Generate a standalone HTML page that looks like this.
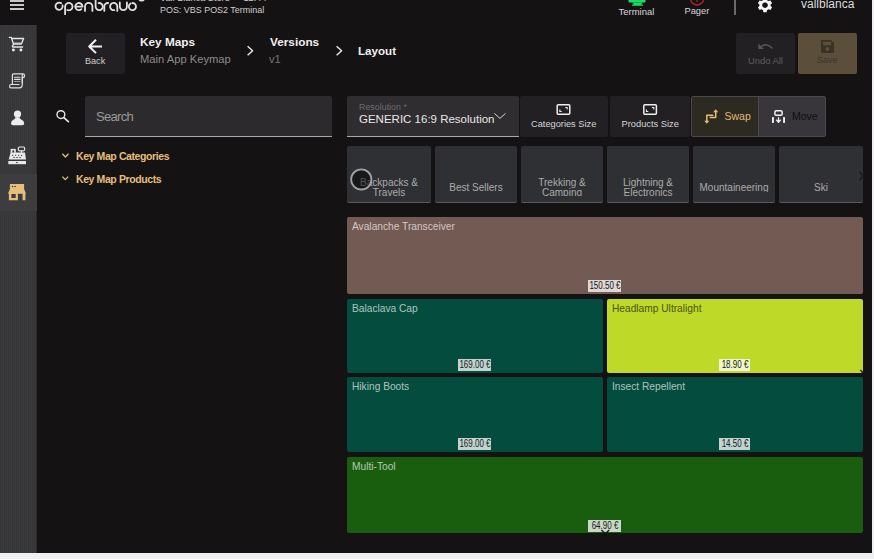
<!DOCTYPE html>
<html><head><meta charset="utf-8">
<style>
*{box-sizing:border-box;margin:0;padding:0}
html,body{width:874px;height:559px;overflow:hidden;background:#eff0f1;font-family:"Liberation Sans",sans-serif}
#app{position:absolute;left:0;top:0;width:872px;height:553px;background:#141213;overflow:hidden}
.a{position:absolute;white-space:nowrap}
#side{position:absolute;left:0;top:25px;width:37px;height:528px;background:repeating-linear-gradient(90deg,#363538 0 1px,#3a393c 1px 2px);box-shadow:inset -1px 0 0 #2a292b}
#sel{position:absolute;left:0;top:174px;width:37px;height:37px;background:#3d3c3f}
.btn{position:absolute;background:#222023;border-radius:2px}
.fld{position:absolute;background:#2d2b2e;border-bottom:1.5px solid #a9a9a9;border-radius:2px 2px 0 0}
.cat{position:absolute;top:146px;height:56px;background:#2f3033;border-radius:2px;overflow:hidden;box-shadow:0 1px 0 #5a5a5c}
.cat span{position:absolute;left:0;right:0;text-align:center;color:#ababab;font-size:10px;line-height:10px;white-space:normal}
.prod{position:absolute;border-radius:2px}
.pn{position:absolute;left:5px;top:3.8px;font-size:10.2px;color:rgba(255,255,255,.68);white-space:nowrap}
.pr{position:absolute;left:50%;bottom:2px;height:12px;font-size:10px;line-height:11px;color:#161616;background:rgba(255,255,255,.76);text-align:center;white-space:nowrap}
.pr span{position:absolute;left:50%;top:0;transform:translateX(-50%) scaleX(.8)}
</style></head><body>
<div id="app">
  <!-- header -->
  <div class="a" style="left:10px;top:0px;width:14px;height:8px">
    <div style="position:absolute;left:0;top:0;width:14px;height:2px;background:#c8c8c8"></div>
    <div style="position:absolute;left:0;top:4px;width:14px;height:2px;background:#c8c8c8"></div>
    <div style="position:absolute;left:0;top:8px;width:14px;height:2px;background:#c8c8c8"></div>
  </div>
    <div class="a" style="left:160px;top:-7.5px;font-size:9.2px;color:#cfcfcf">Vall Blanca Store</div><div class="a" style="left:243.5px;top:-7.5px;font-size:9.2px;color:#cfcfcf">12:44</div>
  <div class="a" style="left:160px;top:4.6px;font-size:8.95px;color:#cfcfcf">POS: VBS POS2 Terminal</div>
  <div class="a" style="left:618.5px;top:6px;font-size:9.5px;color:#d8d8d8">Terminal</div>
  <div class="a" style="left:684.5px;top:6px;font-size:9.3px;color:#d8d8d8">Pager</div>
  <div class="a" style="left:734px;top:0;width:2px;height:15px;background:#6a6a6a"></div>
  <div class="a" style="left:801px;top:-3px;font-size:12px;color:#dcdcdc">vallblanca</div>

  <!-- sidebar -->
  <div id="side"></div><div id="sel"></div>

  <!-- back & breadcrumb -->
  <div class="btn" style="left:66px;top:33px;width:59px;height:41px"></div>
  <div class="a" style="left:85px;top:55.7px;font-size:9.1px;color:#d0d0d0">Back</div>
  <div class="a" style="left:140px;top:35px;font-size:11.8px;font-weight:bold;color:#f0f0f0">Key Maps</div>
  <div class="a" style="left:140px;top:53px;font-size:11.2px;color:#8c8c8c">Main App Keymap</div>
  <div class="a" style="left:270px;top:35px;font-size:11.8px;font-weight:bold;color:#f0f0f0">Versions</div>
  <div class="a" style="left:269px;top:53px;font-size:11.2px;color:#767676">v1</div>
  <div class="a" style="left:358px;top:44px;font-size:11.6px;font-weight:bold;color:#f0f0f0">Layout</div>

  <div class="btn" style="left:736px;top:33px;width:59px;height:41px"></div>
  <div class="a" style="left:748px;top:55px;font-size:9.4px;color:#5e5e5e">Undo All</div>
  <div class="btn" style="left:798px;top:33px;width:59px;height:41px;background:#5b4f3b"></div>
  <div class="a" style="left:817px;top:55px;font-size:9px;color:#3b3428">Save</div>

  <!-- search -->
  <div class="fld" style="left:85px;top:96px;width:247px;height:41px;background:#2c2a2d"></div>
  <div class="a" style="left:96px;top:108.5px;font-size:13px;letter-spacing:-0.7px;color:#9b9b9b">Search</div>
  <div class="a" style="left:76px;top:150px;font-size:10.5px;font-weight:bold;color:#e6bf7b;letter-spacing:-0.4px">Key Map Categories</div>
  <div class="a" style="left:76px;top:173px;font-size:10.5px;font-weight:bold;color:#e6bf7b;letter-spacing:-0.4px">Key Map Products</div>

  <!-- resolution -->
  <div class="fld" style="left:347px;top:96px;width:172px;height:41px;background:#2f2d30"></div>
  <div class="a" style="left:359px;top:102px;font-size:8.9px;color:#6c6c6c">Resolution *</div>
  <div class="a" style="left:359px;top:113px;font-size:11.5px;color:#e8e8e8">GENERIC 16:9 Resolution</div>

  <div class="btn" style="left:519.5px;top:96px;width:88px;height:40.5px"></div>
  <div class="a" style="left:531px;top:118.8px;font-size:9.25px;color:#d6d6d6">Categories Size</div>
  <div class="btn" style="left:610px;top:96px;width:79.5px;height:40.5px"></div>
  <div class="a" style="left:621.5px;top:118.8px;font-size:9.3px;color:#d6d6d6">Products Size</div>

  <div class="a" style="left:691px;top:96px;width:135px;height:41px;border:1px solid #4a484c;border-radius:2px;background:#38363a;overflow:hidden">
    <div style="position:absolute;left:0;top:0;width:67px;height:39px;background:#2d2a21;border-right:1px solid #4a484c"></div>
  </div>
  <div class="a" style="left:724.5px;top:110px;font-size:10.5px;color:#e1b978">Swap</div>
  <div class="a" style="left:792px;top:110px;font-size:10.5px;color:#0e0e0e">Move</div>

  <!-- categories -->
  <div class="cat" style="left:347px;width:84px"><span style="top:31.5px">Backpacks &amp;<br>Travels</span></div>
  <div class="cat" style="left:435px;width:82px"><span style="top:36.5px">Best Sellers</span></div>
  <div class="cat" style="left:521px;width:82px"><span style="top:31.5px;height:18px;overflow:hidden">Trekking &amp;<br>Camping</span></div>
  <div class="cat" style="left:607px;width:82px"><span style="top:31.5px">Lightning &amp;<br>Electronics</span></div>
  <div class="cat" style="left:693px;width:82px"><span style="top:36.5px;height:9px;overflow:hidden">Mountaineering</span></div>
  <div class="cat" style="left:779px;width:84px"><span style="top:36.5px">Ski</span></div>

  <!-- products -->
  <div class="prod" style="left:347px;top:217px;width:516px;height:77px;background:#735a52">
    <div class="pn">Avalanche Transceiver</div>
    <div class="pr" style="width:33px;margin-left:-16.90px"><span>150.50 €</span></div>
  </div>
  <div class="prod" style="left:347px;top:299px;width:256px;height:74px;background:#044c3d">
    <div class="pn">Balaclava Cap</div>
    <div class="pr" style="width:33px;margin-left:-16.90px"><span>169.00 €</span></div>
  </div>
  <div class="prod" style="left:607px;top:299px;width:256px;height:74px;background:#bfd929">
    <div class="pn" style="color:#4a5512">Headlamp Ultralight</div>
    <div class="pr" style="width:31.7px;margin-left:-16.25px"><span>18.90 €</span></div>
  </div>
  <div class="prod" style="left:347px;top:377px;width:256px;height:75px;background:#044c3d">
    <div class="pn">Hiking Boots</div>
    <div class="pr" style="width:33px;margin-left:-16.90px"><span>169.00 €</span></div>
  </div>
  <div class="prod" style="left:607px;top:377px;width:256px;height:75px;background:#044c3d">
    <div class="pn">Insect Repellent</div>
    <div class="pr" style="width:31.7px;margin-left:-16.25px"><span>14.50 €</span></div>
  </div>
  <div class="prod" style="left:347px;top:457px;width:516px;height:75.5px;background:#195e0f">
    <div class="pn">Multi-Tool</div>
    <div class="pr" style="width:32.8px;margin-left:-16.80px;bottom:0.5px"><span>64.90 €</span></div>
  </div>
</div>

<svg id="ov" width="874" height="559" viewBox="0 0 874 559" style="position:absolute;left:0;top:0;pointer-events:none">
 <g fill="none" stroke-linecap="round" stroke-linejoin="round">
  <!-- logo -->
  <g stroke="#e2e2e2" stroke-width="1.8">
   <path d="M61.2,3.3 A3.6,3.6 0 1 0 62.6,5.4"/>
   <path d="M65.1,14.2 V6.6 A3.7,3.7 0 1 1 67.3,10"/>
   <path d="M75.3,6.6 H82.5 A3.6,3.6 0 1 0 81.4,9.2"/>
   <path d="M85,10.9 V6.6 A3.7,3.7 0 0 1 92.4,6.6 V10.9"/>
   <path d="M95.6,-3 V6.6 A3.6,3.6 0 1 0 98.6,3.05"/>
   <path d="M104.3,10.9 V6.6 A3.6,3.6 0 0 1 108.2,3"/>
   <path d="M117.3,10.9 V6.6 A3.6,3.6 0 1 0 114.3,10.1"/>
   <path d="M119.8,2.5 V6.6 A3.55,3.55 0 0 0 126.9,6.6 V2.5"/>
   <path d="M130.6,3.5 A3.6,3.6 0 1 0 132.5,3"/>
  </g>
  <circle cx="141.6" cy="-1.8" r="3.4" fill="#e2e2e2"/>
  <!-- terminal icon -->
  <path d="M628.5,-3 H645.5 V1.8 Q645.5,2.6 644.7,2.6 H629.3 Q628.5,2.6 628.5,1.8 Z" fill="#1ed866"/>
  <path d="M632,2.4 H643 L641,4.4 H643 V5.8 H632 V4.4 H634 Z" fill="#1ed866"/>
  <!-- pager icon -->
  <circle cx="697.1" cy="-1.6" r="6.6" stroke="#b8262a" stroke-width="1.3"/>
  <path d="M697,-1 V1.5" stroke="#b8262a" stroke-width="1.2"/>
  <!-- gear -->
  <g transform="translate(765,5.2)" fill="#f4f4f4" stroke="none">
   <path d="M-1.6,-7 H1.6 L2,-5 L3.6,-4.1 L5.5,-4.8 L7.1,-2 L5.6,-0.7 V0.7 L7.1,2 L5.5,4.8 L3.6,4.1 L2,5 L1.6,7 H-1.6 L-2,5 L-3.6,4.1 L-5.5,4.8 L-7.1,2 L-5.6,0.7 V-0.7 L-7.1,-2 L-5.5,-4.8 L-3.6,-4.1 L-2,-5 Z M0,-2.8 A2.8,2.8 0 1 0 0.01,-2.8 Z" fill-rule="evenodd"/>
  </g>
  <!-- sidebar icons -->
  <g stroke="#e6e6e6" stroke-width="1.35">
   <path d="M9.3,37.3 H11.2 L13.6,44.2 L12.4,46.2 Q12.2,47 13,47 H22.6"/>
   <path d="M12.3,38.5 H23.6 L21.4,44.1 H13.7"/>
  </g>
  <path d="M14.2,42.6 H21.9 L21.4,44.1 H13.7 Z" fill="#c9c9c9"/>
  <circle cx="13.4" cy="50" r="1.45" fill="#ececec"/>
  <circle cx="20.9" cy="50" r="1.45" fill="#ececec"/>
  <g stroke="#e0e0e0" stroke-width="1.2">
   <path d="M12.4,84.5 V74.9 Q12.4,73.9 13.4,73.9 H23.2 Q24.5,73.9 24.5,75.7 Q24.5,77.6 22.6,77.6 H22.3 V83"/>
   <path d="M22.3,74.3 V84 Q22.3,87.9 19.5,87.9 H11 Q9.6,87.9 9.6,86.2 Q9.6,84.5 11,84.5 H19"/>
   <path d="M14.5,77.3 H20" stroke-width="1.1"/>
   <path d="M14.5,79.4 H20" stroke-width="1.1"/>
   <path d="M14.5,81.5 H20" stroke-width="1.1" stroke="#9a9a9a"/>
  </g>
  <circle cx="17.5" cy="114" r="3.6" fill="#ececec"/>
  <path d="M15.3,117.2 Q15.8,118.6 13.8,119.5 Q11,120.8 11,123.4 Q11,125.2 13,125.2 H22.2 Q24.2,125.2 24.2,123.4 Q24.2,120.8 21.2,119.5 Q19.3,118.6 19.7,117.2 Z" fill="#ececec"/>
  <g fill="#e8e8e8">
   <path d="M10.6,152.6 H25 L26,159.6 H8.7 Z"/>
   <path d="M10.6,148.9 H15.8 V152.8 H10.6 Z"/>
   <path d="M8.3,161 H26 V164.2 H8.3 Z"/>
   <path d="M20.9,150.5 H22.1 V152.8 H20.9 Z"/>
  </g>
  <rect x="18.3" y="147" width="6.3" height="3.8" rx="1.2" stroke="#e8e8e8" stroke-width="1.2"/>
  <g fill="#38363a">
   <rect x="12.4" y="150.3" width="1.7" height="2.2"/>
   <circle cx="12.6" cy="155.3" r="0.65"/><circle cx="15.6" cy="155.3" r="0.65"/><circle cx="18.6" cy="155.3" r="0.65"/><circle cx="21.6" cy="155.3" r="0.65"/>
   <rect x="13.3" y="157" width="1.5" height="0.9"/><rect x="16.3" y="157" width="1.5" height="0.9"/><rect x="19.3" y="157" width="1.5" height="0.9"/>
   <rect x="16" y="162.2" width="1.8" height="0.9"/>
  </g>
  <g fill="#e7bf7d">
   <path d="M9.9,184.1 H24.1 V189 L26,193.8 H25.4 V200.2 H22.6 V193.8 H17.9 V200.2 H8.9 V193.8 H8 L9.9,189 Z M11.4,194.1 V197.9 H15.7 V194.1 Z" fill-rule="evenodd"/>
  </g>
  <circle cx="12.5" cy="186.5" r="0.8" fill="#3d3b3f"/><circle cx="15" cy="186.5" r="0.8" fill="#3d3b3f"/>
  <!-- back arrow -->
  <path d="M96,39.8 L89.2,46.5 L96,53.1 M89.5,46.5 H102" stroke="#f2f2f2" stroke-width="2" stroke-linecap="butt"/>
  <!-- breadcrumb chevrons -->
  <path d="M247.6,46.3 L252.6,50.8 L247.6,55.3" stroke="#e8e8e8" stroke-width="1.5" stroke-linecap="butt"/>
  <path d="M336.6,46.3 L341.6,50.8 L336.6,55.3" stroke="#e8e8e8" stroke-width="1.5" stroke-linecap="butt"/>
  <!-- undo -->
  <path d="M762,46.2 Q766.5,42.5 772,48" stroke="#575757" stroke-width="1.5"/>
  <path d="M758.4,43.5 V49 H763.8 Z" fill="#575757"/>
  <!-- save -->
  <path d="M821,40 H831 L834,43 V53 H821 Z M823,41.8 V45.2 H831.2 V41.8 Z M827.5,46.9 A2,2 0 1 0 827.51,46.9 Z" fill="#3a3226" fill-rule="evenodd"/>
  <!-- search -->
  <circle cx="60.9" cy="114.6" r="3.9" stroke="#e8e8e8" stroke-width="1.4"/>
  <path d="M63.9,117.6 L68.4,121.6" stroke="#e8e8e8" stroke-width="1.6"/>
  <!-- tree chevrons -->
  <path d="M62.4,153.8 L65.4,157 L68.5,153.8" stroke="#e6bf7b" stroke-width="1.3" stroke-linecap="butt"/>
  <path d="M62.4,176.6 L65.3,179.6 L68.2,176.6" stroke="#e6bf7b" stroke-width="1.3" stroke-linecap="butt"/>
  <!-- dropdown chevron -->
  <path d="M494.4,113.4 L499.9,118.4 L505.5,113.4" stroke="#d8d8d8" stroke-width="1" stroke-linecap="butt"/>
  <!-- size icons -->
  <g stroke="#eeeeee" stroke-width="1.5">
   <rect x="557.2" y="104.7" width="12.6" height="9.6" rx="1"/>
   <rect x="643.8" y="104.7" width="12.6" height="9.6" rx="1"/>
  </g>
  <g fill="#eeeeee">
   <path d="M565.3,107 H567.7 V109.4 H566.6 V108.1 H565.3 Z"/>
   <path d="M559.3,109.6 H560.4 V110.9 H561.7 V112 H559.3 Z"/>
   <path d="M651.9,107 H654.3 V109.4 H653.2 V108.1 H651.9 Z"/>
   <path d="M645.9,109.6 H647 V110.9 H648.3 V112 H645.9 Z"/>
  </g>
  <!-- swap -->
  <g stroke="#e8bd74" stroke-width="1.5" stroke-linecap="butt">
   <path d="M715.7,111 V117.6 H709.6"/>
   <path d="M706.8,122 V115.2 H713.3"/>
  </g>
  <path d="M713.2,112.2 L715.7,109.3 L718.2,112.2 Z" fill="#e8bd74"/>
  <path d="M704.3,120.8 L706.8,123.8 L709.3,120.8 Z" fill="#e8bd74"/>
  <!-- move -->
  <rect x="774.9" y="110.7" width="7.2" height="4.5" rx="1.3" stroke="#f2f2f2" stroke-width="1.5"/>
  <rect x="772" y="117.1" width="1.9" height="5.8" fill="#f2f2f2"/>
  <rect x="783.1" y="117.1" width="1.9" height="5.8" fill="#f2f2f2"/>
  <path d="M778.5,117.3 V121.5 M776.3,119.8 L778.5,122.2 L780.7,119.8" stroke="#f2f2f2" stroke-width="1.3" stroke-linecap="butt"/>
  <!-- circle in category -->
  <circle cx="361.3" cy="179.4" r="10.1" fill="rgba(0,0,0,0.5)" stroke="#a2a2a2" stroke-width="1.8"/>
  <!-- ski chevron -->
  <path d="M859.5,172 L863.5,176 L859.5,180" stroke="#1a1a1a" stroke-width="1.3" stroke-linecap="butt"/>
  <!-- headlamp corner chevron -->
  <path d="M860.3,370 L862.8,372.5 L860.3,375" stroke="#1a1a1a" stroke-width="1.2" stroke-linecap="butt"/>
  <!-- multi-tool chevron -->
  <path d="M601.3,530 L605.3,533.5 L609.3,530" stroke="#1a1a1a" stroke-width="1.3" stroke-linecap="butt"/>
 </g>
</svg>
</body></html>
